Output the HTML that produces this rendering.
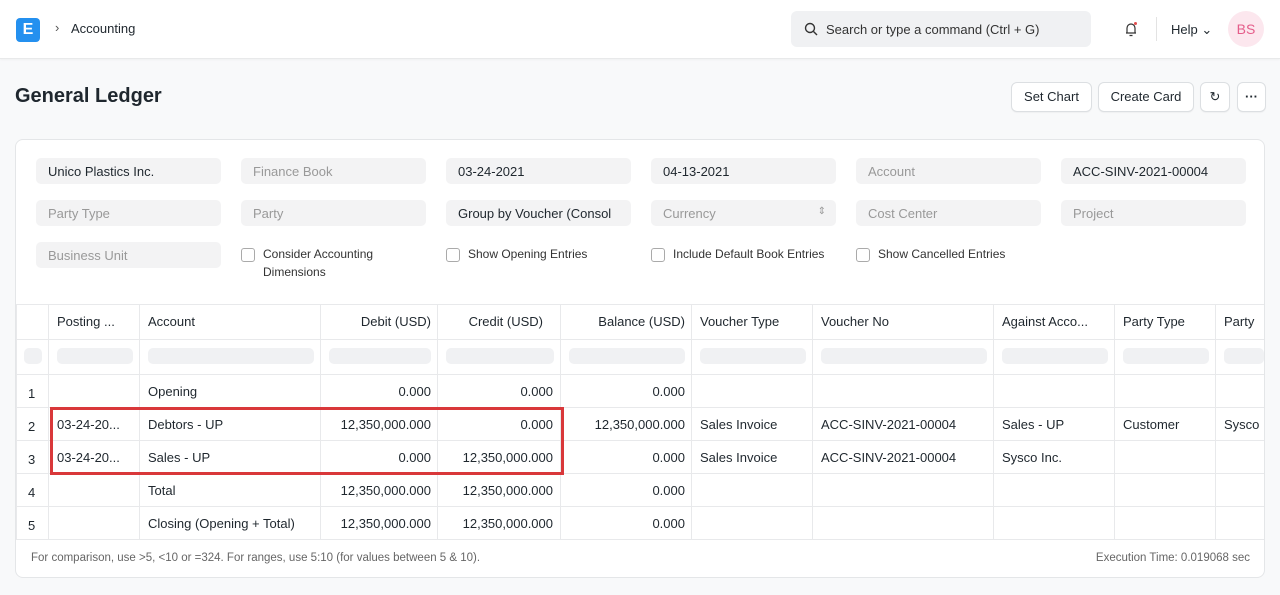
<!DOCTYPE html>
<html><head><style>
*{box-sizing:border-box;margin:0;padding:0}
body{width:1280px;height:595px;background:#f8f9fa;font-family:"Liberation Sans",sans-serif;color:#1f272e;position:relative;overflow:hidden;font-size:13px}
.nav{position:absolute;top:0;left:0;width:1280px;height:59px;background:#fff;border-bottom:1px solid #e8e9ea;box-shadow:0 1px 2px rgba(0,0,0,.04)}
.abs{position:absolute}
.logo{left:16px;top:18px;width:24px;height:24px;background:#2490ef;border-radius:4px;color:#fff;font-weight:bold;font-size:16px;text-align:center;line-height:24px}
.search{left:791px;top:11px;width:300px;height:36px;background:#f0f1f3;border-radius:6px;font-size:13px;color:#333;padding:11px 0 0 35px}
.btn{position:absolute;top:82px;height:30px;background:#fff;border:1px solid #dcdfe2;border-radius:6px;font-size:13px;text-align:center;line-height:28px;box-shadow:0 1px 1px rgba(0,0,0,.04)}
.card{left:15px;top:139px;width:1250px;height:439px;background:#fff;border:1px solid #e4e6e8;border-radius:8px;overflow:hidden}
.inp{position:absolute;width:185px;height:26px;background:#f3f3f4;border-radius:5px;font-size:13px;padding:6px 12px;color:#999;white-space:nowrap;overflow:hidden}
.inp.v{color:#1f272e}
.cb{position:absolute;font-size:12px;color:#333;padding-left:22px;line-height:18px}
.cb:before{content:"";position:absolute;left:0;top:3px;width:12px;height:12px;border:1px solid #aaa;border-radius:3px}
.vl{position:absolute;top:165px;width:1px;height:235px;background:#e8e9eb}
.hl{position:absolute;left:0;width:1250px;height:1px;background:#e8e9eb}
.c{position:absolute;font-size:13px;white-space:nowrap}
.r{text-align:right}
.ph{position:absolute;top:208px;height:16px;background:#f0f1f3;border-radius:5px}
</style></head><body>
<div class="nav">
<div class="abs logo">E</div>
<div class="abs" style="left:55px;top:20px;font-size:13px;color:#555">›</div>
<div class="abs" style="left:71px;top:21px;font-size:13px">Accounting</div>
<div class="abs search">Search or type a command (Ctrl + G)</div>
<svg class="abs" style="left:804px;top:22px" width="14" height="14" viewBox="0 0 14 14" fill="none" stroke="#333" stroke-width="1.4"><circle cx="6" cy="6" r="4.5"/><path d="M9.5 9.5L13 13"/></svg>
<svg class="abs" style="left:1122px;top:20px" width="18" height="18" viewBox="0 0 18 18" fill="none" stroke="#333" stroke-width="1.2"><path d="M4 13h10M5 13V8a4 4 0 0 1 8 0v5M7.5 15.5h3"/><circle cx="13.5" cy="3.5" r="1.5" fill="#e24c4c" stroke="none"/></svg>
<div class="abs" style="left:1156px;top:17px;width:1px;height:24px;background:#e3e3e3"></div>
<div class="abs" style="left:1171px;top:22px;font-size:13px">Help ⌄</div>
<div class="abs" style="left:1228px;top:11px;width:36px;height:36px;border-radius:50%;background:#fce7ee;color:#e55d8a;font-size:14px;text-align:center;line-height:36px">BS</div>
</div>
<div class="abs" style="left:15px;top:85px;font-size:20px;font-weight:bold">General Ledger</div>
<div class="btn" style="left:1011px;width:81px">Set Chart</div>
<div class="btn" style="left:1098px;width:96px">Create Card</div>
<div class="btn" style="left:1200px;width:30px">↻</div>
<div class="btn" style="left:1237px;width:29px;font-weight:bold">···</div>
<div class="abs card">
<div class="inp v" style="left:20px;top:18px">Unico Plastics Inc.</div>
<div class="inp" style="left:225px;top:18px">Finance Book</div>
<div class="inp v" style="left:430px;top:18px">03-24-2021</div>
<div class="inp v" style="left:635px;top:18px">04-13-2021</div>
<div class="inp" style="left:840px;top:18px">Account</div>
<div class="inp v" style="left:1045px;top:18px">ACC-SINV-2021-00004</div>
<div class="inp" style="left:20px;top:60px">Party Type</div>
<div class="inp" style="left:225px;top:60px">Party</div>
<div class="inp v" style="left:430px;top:60px">Group by Voucher (Consol</div>
<div class="inp" style="left:635px;top:60px">Currency<span style="position:absolute;right:10px;font-size:10px">⇕</span></div>
<div class="inp" style="left:840px;top:60px">Cost Center</div>
<div class="inp" style="left:1045px;top:60px">Project</div>
<div class="inp" style="left:20px;top:102px">Business Unit</div>
<div class="cb" style="left:225px;top:105px">Consider Accounting<br>Dimensions</div>
<div class="cb" style="left:430px;top:105px">Show Opening Entries</div>
<div class="cb" style="left:635px;top:105px">Include Default Book Entries</div>
<div class="cb" style="left:840px;top:105px">Show Cancelled Entries</div>
<div class="hl" style="top:164px"></div>
<div class="hl" style="top:199px"></div>
<div class="hl" style="top:234px"></div>
<div class="hl" style="top:267px"></div>
<div class="hl" style="top:300px"></div>
<div class="hl" style="top:333px"></div>
<div class="hl" style="top:366px"></div>
<div class="hl" style="top:399px"></div>
<div class="vl" style="left:0"></div><div class="vl" style="left:32px"></div><div class="vl" style="left:123px"></div><div class="vl" style="left:304px"></div><div class="vl" style="left:421px"></div><div class="vl" style="left:544px"></div><div class="vl" style="left:675px"></div><div class="vl" style="left:796px"></div><div class="vl" style="left:977px"></div><div class="vl" style="left:1098px"></div><div class="vl" style="left:1199px"></div>
<div class="ph" style="left:8px;width:18px"></div><div class="ph" style="left:41px;width:76px"></div><div class="ph" style="left:132px;width:166px"></div><div class="ph" style="left:313px;width:102px"></div><div class="ph" style="left:430px;width:108px"></div><div class="ph" style="left:553px;width:116px"></div><div class="ph" style="left:684px;width:106px"></div><div class="ph" style="left:805px;width:166px"></div><div class="ph" style="left:986px;width:106px"></div><div class="ph" style="left:1107px;width:86px"></div><div class="ph" style="left:1208px;width:40px"></div>
<div class="c" style="left:41px;top:174px">Posting ...</div><div class="c" style="left:132px;top:174px">Account</div>
<div class="c r" style="left:304px;width:111px;top:174px">Debit (USD)</div><div class="c r" style="left:421px;width:106px;top:174px">Credit (USD)</div><div class="c r" style="left:544px;width:125px;top:174px">Balance (USD)</div>
<div class="c" style="left:684px;top:174px">Voucher Type</div><div class="c" style="left:805px;top:174px">Voucher No</div><div class="c" style="left:986px;top:174px">Against Acco...</div><div class="c" style="left:1107px;top:174px">Party Type</div><div class="c" style="left:1208px;top:174px">Party</div>
<div class="c" style="left:12px;top:246px">1</div><div class="c" style="left:132px;top:244px">Opening</div><div class="c r" style="left:304px;width:111px;top:244px">0.000</div><div class="c r" style="left:421px;width:116px;top:244px">0.000</div><div class="c r" style="left:544px;width:125px;top:244px">0.000</div>
<div class="c" style="left:12px;top:279px">2</div><div class="c" style="left:41px;top:277px">03-24-20...</div><div class="c" style="left:132px;top:277px">Debtors - UP</div><div class="c r" style="left:304px;width:111px;top:277px">12,350,000.000</div><div class="c r" style="left:421px;width:116px;top:277px">0.000</div><div class="c r" style="left:544px;width:125px;top:277px">12,350,000.000</div><div class="c" style="left:684px;top:277px">Sales Invoice</div><div class="c" style="left:805px;top:277px">ACC-SINV-2021-00004</div><div class="c" style="left:986px;top:277px">Sales - UP</div><div class="c" style="left:1107px;top:277px">Customer</div><div class="c" style="left:1208px;top:277px">Sysco</div>
<div class="c" style="left:12px;top:312px">3</div><div class="c" style="left:41px;top:310px">03-24-20...</div><div class="c" style="left:132px;top:310px">Sales - UP</div><div class="c r" style="left:304px;width:111px;top:310px">0.000</div><div class="c r" style="left:421px;width:116px;top:310px">12,350,000.000</div><div class="c r" style="left:544px;width:125px;top:310px">0.000</div><div class="c" style="left:684px;top:310px">Sales Invoice</div><div class="c" style="left:805px;top:310px">ACC-SINV-2021-00004</div><div class="c" style="left:986px;top:310px">Sysco Inc.</div>
<div class="c" style="left:12px;top:345px">4</div><div class="c" style="left:132px;top:343px">Total</div><div class="c r" style="left:304px;width:111px;top:343px">12,350,000.000</div><div class="c r" style="left:421px;width:116px;top:343px">12,350,000.000</div><div class="c r" style="left:544px;width:125px;top:343px">0.000</div>
<div class="c" style="left:12px;top:378px">5</div><div class="c" style="left:132px;top:376px">Closing (Opening + Total)</div><div class="c r" style="left:304px;width:111px;top:376px">12,350,000.000</div><div class="c r" style="left:421px;width:116px;top:376px">12,350,000.000</div><div class="c r" style="left:544px;width:125px;top:376px">0.000</div>
<div class="abs" style="left:34px;top:267px;width:514px;height:68px;border:3px solid #d9383a"></div>
<div class="c" style="left:15px;top:412px;font-size:11.5px;color:#666">For comparison, use &gt;5, &lt;10 or =324. For ranges, use 5:10 (for values between 5 &amp; 10).</div>
<div class="c" style="right:14px;top:412px;font-size:11.5px;color:#666">Execution Time: 0.019068 sec</div>
</div>
</body></html>
